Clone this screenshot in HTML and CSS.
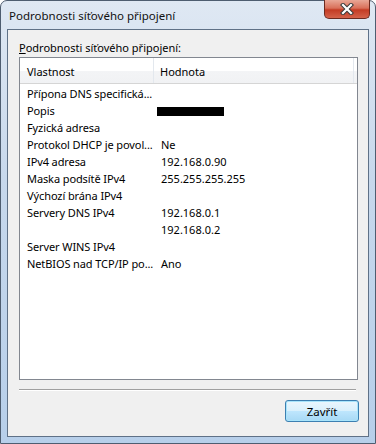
FILE: index.html
```html
<!DOCTYPE html>
<html>
  <head>
    <title>Podrobnosti síťového připojení</title>
    <link rel="stylesheet" href="styles.css">
  </head>
  <body>
    <div class="window">
      <div class="titlebar">
        <span class="title">Podrobnosti síťového připojení</span>
        <div class="close">
          <svg width="18" height="12" viewBox="0 0 18 12">
            <path d="M5 2 L13 10 M13 2 L5 10" stroke="#3a3a3a" stroke-width="4.2" stroke-linecap="square" fill="none" />
            <path d="M5 2 L13 10 M13 2 L5 10" stroke="#ffffff" stroke-width="2.2" stroke-linecap="square" fill="none" />
          </svg>
        </div>
      </div>
      <div class="client">
        <div class="caption"><u>P</u>odrobnosti síťového připojení:</div>
        <div class="listview">
          <div class="lv-head">
            <div class="col-name">Vlastnost</div>
            <div class="col-value">Hodnota</div>
          </div>
          <div class="lv-body">
            <div class="row"><span class="name">Přípona DNS specifická...</span><span class="value"></span></div>
            <div class="row"><span class="name">Popis</span><span class="value"><span class="redacted"></span></span></div>
            <div class="row"><span class="name">Fyzická adresa</span><span class="value"></span></div>
            <div class="row"><span class="name">Protokol DHCP je povol...</span><span class="value">Ne</span></div>
            <div class="row"><span class="name">IPv4 adresa</span><span class="value">192.168.0.90</span></div>
            <div class="row"><span class="name">Maska podsítě IPv4</span><span class="value">255.255.255.255</span></div>
            <div class="row"><span class="name">Výchozí brána IPv4</span><span class="value"></span></div>
            <div class="row"><span class="name">Servery DNS IPv4</span><span class="value">192.168.0.1</span></div>
            <div class="row"><span class="name"></span><span class="value">192.168.0.2</span></div>
            <div class="row"><span class="name">Server WINS IPv4</span><span class="value"></span></div>
            <div class="row"><span class="name">NetBIOS nad TCP/IP po...</span><span class="value">Ano</span></div>
          </div>
        </div>
        <div class="separator"></div>
        <div class="buttons">
          <button class="btn">Zavřít</button>
        </div>
      </div>
    </div>
  </body>
</html>
```

FILE: styles.css
```css
/* Reset */
* {
  box-sizing: border-box;
}
body {
  margin: 0;
  font-family: "Noto Sans", "Open Sans", sans-serif;
  font-size: 11px;
  color: #000;
  background: #fff;
}

/* Window frame */
.window {
  width: 376px;
  height: 444px;
  display: flex;
  flex-direction: column;
  border: 1px solid #4e5d70;
  border-radius: 7px 7px 0 0;
  background: linear-gradient(to bottom, #dfe8f3 0%, #c7d8ec 40%, #b7cfea 100%);
  padding: 0 6px 6px 6px;
}

.titlebar {
  height: 28px;
  display: flex;
  align-items: flex-start;
  justify-content: space-between;
}

.title {
  margin-top: 7px;
  margin-left: 2px;
  font-size: 11.5px;
  color: #111;
}

.close {
  width: 46px;
  height: 19px;
  margin-top: -1px;
  margin-right: -1px;
  border: 1px solid #6b2a20;
  border-top: none;
  border-radius: 0 0 5px 5px;
  background: linear-gradient(to bottom, #e9a796 0%, #d9705a 45%, #c33b24 55%, #d4624a 100%);
  display: flex;
  align-items: center;
  justify-content: center;
}

/* Client area */
.client {
  flex: 1;
  display: flex;
  flex-direction: column;
  border: 1px solid #5f7187;
  background-color: #f0f0f0;
  padding: 0 10px 0 11px;
}

.caption {
  margin-top: 10px;
  height: 17px;
  line-height: 15px;
}

.listview {
  height: 323px;
  border: 1px solid #828790;
  background: #fff;
}

.lv-head {
  height: 26px;
  display: flex;
  border-bottom: 1px solid #d5d5d5;
  background: linear-gradient(to bottom, #ffffff 0%, #ffffff 50%, #f3f4f6 51%, #f1f2f4 100%);
}

.col-name {
  width: 134px;
  padding: 6px 0 0 7px;
  border-right: 1px solid #e3e8ee;
}

.col-value {
  flex: 1;
  padding: 6px 0 0 6px;
  border-right: 1px solid #e3e8ee;
  margin-right: 3px;
}

.lv-body {
  padding-top: 1px;
}

.row {
  height: 17px;
  line-height: 17px;
  display: flex;
}

.row .name {
  flex: 0 0 134px;
  padding-left: 7px;
  white-space: nowrap;
  letter-spacing: -0.1px;
}

.row .value {
  padding-left: 7px;
  white-space: nowrap;
}

.redacted {
  display: inline-block;
  width: 67px;
  height: 9px;
  background: #000;
  vertical-align: -1px;
  margin-left: -4px;
}

.separator {
  margin-top: 9px;
  width: 337px;
  height: 2px;
  border-top: 1px solid #a0a0a0;
  border-bottom: 1px solid #ffffff;
}

.buttons {
  display: flex;
  justify-content: flex-end;
  padding-top: 9px;
}

.btn {
  width: 74px;
  height: 22px;
  font-family: inherit;
  font-size: 11.5px;
  color: #000;
  border: 1px solid #3c7fb1;
  border-radius: 3px;
  box-shadow: inset 0 0 0 1px #a8e4fb;
  background: linear-gradient(to bottom, #eaf6fd 0%, #d9f0fc 50%, #bee6fd 51%, #a7d9f5 100%);
  padding: 0;
  margin-right: -1px;
}
```
